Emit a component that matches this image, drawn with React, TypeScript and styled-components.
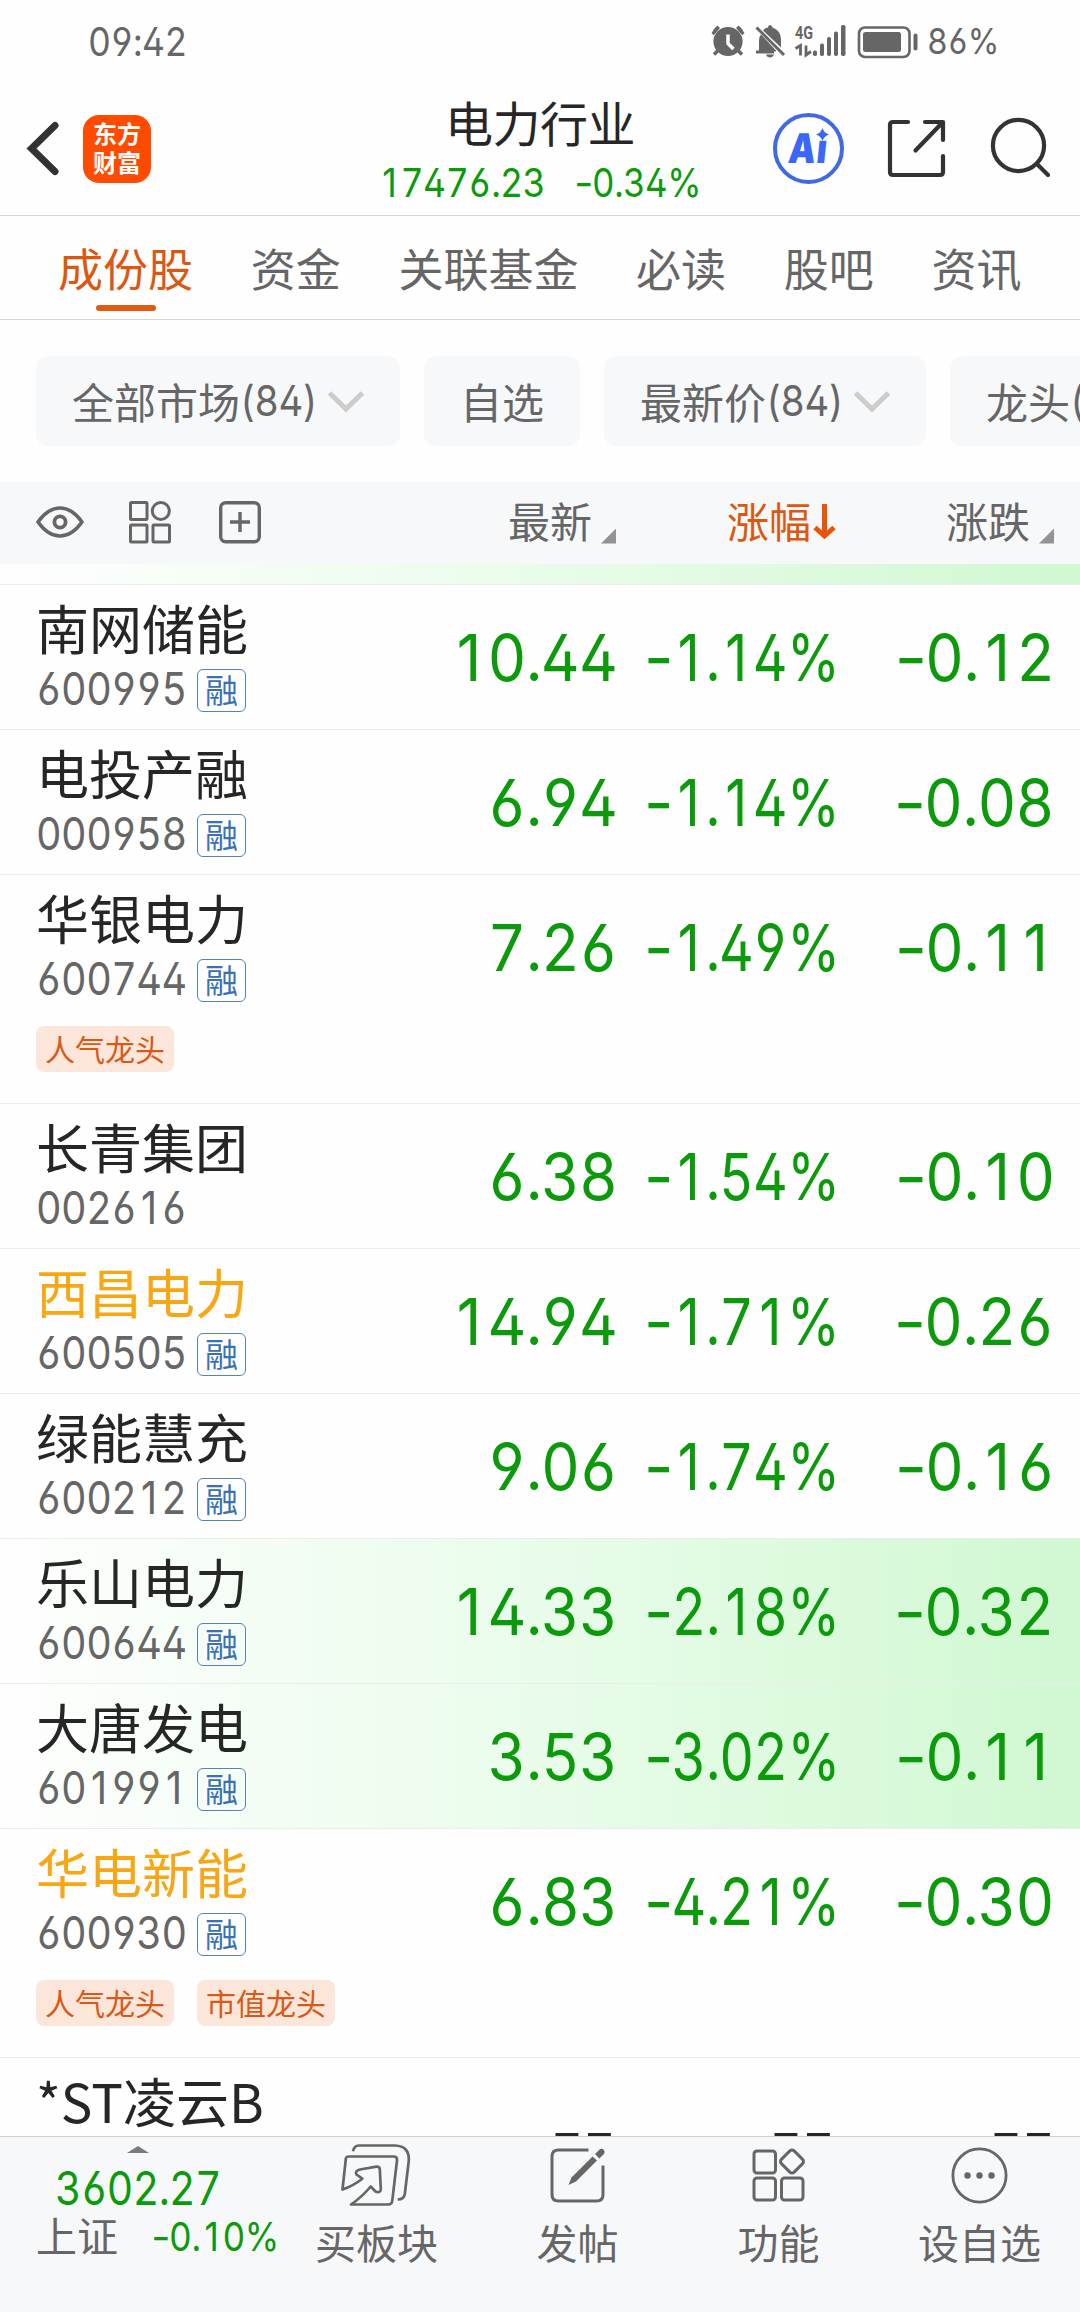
import React from "react";
import styled, { createGlobalStyle } from "styled-components";

const ink = "#262626";
const grey = "#666666";
const green = "#0a9a0a";
const orange = "#dc5810";
const panel = "#f7f8fa";

const GlobalStyle = createGlobalStyle`
  * { box-sizing: border-box; }
  body {
    margin: 0;
    background: #fefefe;
    font-family: "Noto Sans CJK SC", sans-serif;
    color: ${ink};
  }
`;

const Screen = styled.div`
  width: 1080px;
  height: 2312px;
  display: flex;
  flex-direction: column;
  overflow: hidden;
  background: #fefefe;
  white-space: nowrap;
`;

const Icon = styled.svg`
  display: block;
  flex: none;
  overflow: visible;
  fill: none;
  stroke: ${grey};
`;

/* Condensed tabular figures with open 4, 6 and 9 */
const Figures = styled.span<{ $size: number; $scale: number; $from: string; $color: string }>`
  display: inline-block;
  font-family: Inter, "Noto Sans CJK SC", sans-serif;
  font-size: ${(p) => p.$size}px;
  line-height: 1;
  letter-spacing: -0.015em;
  font-feature-settings: "cv02", "cv03", "cv04";
  font-variant-numeric: tabular-nums;
  color: ${(p) => p.$color};
  transform: scaleX(${(p) => p.$scale});
  transform-origin: ${(p) => p.$from} center;
`;
const One = styled.span`
  display: inline-block;
  width: 0.63em;
  text-align: center;
  font-variant-numeric: proportional-nums;
`;
const Point = styled.span`
  display: inline-block;
  width: 0.255em;
  font-variant-numeric: proportional-nums;
`;
const Minus = styled.span<{ $wide: boolean }>`
  display: inline-block;
  width: ${(p) => (p.$wide ? 0.54 : 0.485)}em;
  text-align: center;
  font-variant-numeric: proportional-nums;
  transform: scaleX(1.19);
`;

type NumProps = { size: number; scale?: number; from?: string; color?: string; children: string };

const Num = ({ size, scale = 0.895, from = "left", color = green, children }: NumProps) => (
  <Figures $size={size} $scale={scale} $from={from} $color={color}>
    {children.split(/([1.-])/).map((part, i) => {
      if (part === "1") return <One key={i}>1</One>;
      if (part === ".") return <Point key={i}>.</Point>;
      if (part === "-") return <Minus key={i} $wide={children === "--"}>-</Minus>;
      return part;
    })}
  </Figures>
);

const StatusBar = styled.div`
  height: 82px;
  flex: none;
  display: flex;
  align-items: center;
  padding: 0 84px 0 88px;
`;
const StatusIcons = styled.div`
  margin-left: auto;
  display: flex;
  align-items: center;
  gap: 10px;
  width: 285px;
`;

const Header = styled.header`
  height: 134px;
  flex: none;
  display: flex;
  align-items: center;
  border-bottom: 1px solid #d4d4d4;
  padding: 0 30px 0 27px;
`;
const Logo = styled.div`
  width: 68px;
  height: 68px;
  margin-left: 24px;
  border-radius: 16px;
  background: #ff4a00;
  color: #fff;
  font-size: 24px;
  font-weight: 700;
  line-height: 29px;
  text-align: center;
  padding-top: 3px;
`;
const TitleBlock = styled.div`
  flex: 1;
  display: flex;
  flex-direction: column;
  padding-left: 227px;
`;
const Title = styled.div`
  font-size: 48px;
  line-height: 56px;
  padding-left: 67px;
  letter-spacing: -0.5px;
`;
const Quote = styled.div`
  display: flex;
  height: 56px;
  padding-top: 14px;
`;
const QuoteValue = styled.div<{ $w: number }>`
  width: ${(p) => p.$w}px;
  flex: none;
`;
const AiBadge = styled.div`
  width: 71px;
  height: 71px;
  border: 4px solid #4169e6;
  border-radius: 50%;
  display: flex;
  align-items: center;
  justify-content: center;
  position: relative;
  flex: none;
  color: #3a66ff;
  font: 900 41px/1 Inter, sans-serif;
`;
const AiText = styled.span`
  display: inline-block;
  letter-spacing: 1px;
  transform: skewX(-6deg) scaleX(0.84);
`;
const Spark = styled(Icon)`
  position: absolute;
  left: 39px;
  top: 11px;
`;

const Tabs = styled.nav`
  height: 104px;
  flex: none;
  display: flex;
  gap: 57.7px;
  padding-left: 58px;
  border-bottom: 1px solid #d4d4d4;
`;
const Tab = styled.div<{ $active?: boolean }>`
  font-size: 45px;
  line-height: 66px;
  padding-top: 19px;
  display: flex;
  flex-direction: column;
  align-items: center;
  color: ${(p) => (p.$active ? orange : grey)};
  &::after {
    content: "";
    display: ${(p) => (p.$active ? "block" : "none")};
    width: 60px;
    height: 6px;
    margin-top: 4px;
    border-radius: 3px;
    background: #e05a10;
  }
`;

const Filters = styled.div`
  height: 162px;
  flex: none;
  display: flex;
  gap: 24px;
  padding: 36px 0 0 36px;
`;
const Chip = styled.div<{ $w: number }>`
  width: ${(p) => p.$w}px;
  flex: none;
  height: 90px;
  border-radius: 12px;
  background: ${panel};
  color: ${grey};
  font-size: 42px;
  line-height: 90px;
  padding-left: 36px;
  display: flex;
  align-items: center;
`;
const ChipCount = styled.div`
  width: 88px;
  display: flex;
`;

const Columns = styled.div`
  height: 82px;
  flex: none;
  display: grid;
  grid-template-columns: 398px 218px 220px 244px;
  background: ${panel};
`;
const Tools = styled.div`
  display: flex;
  align-items: center;
  padding: 0 0 2px 36px;
`;
const Tool = styled(Icon)<{ $gap: number }>`
  margin-right: ${(p) => p.$gap}px;
`;
const ColumnName = styled.div<{ $active?: boolean; $end?: number }>`
  display: flex;
  justify-content: flex-end;
  align-items: center;
  font-size: 42px;
  line-height: 72px;
  padding-bottom: 7px;
  padding-right: ${(p) => p.$end ?? 0}px;
  color: ${(p) => (p.$active ? orange : grey)};
`;
const Corner = styled.i`
  width: 15px;
  height: 15px;
  margin: 33px 0 0 9px;
  background: #929297;
  clip-path: polygon(100% 0, 100% 100%, 0 100%);
`;

const List = styled.main`
  flex: 1;
  min-height: 0;
  overflow: hidden;
`;
const fade = "linear-gradient(90deg, #fefefe 0, #e9fcea 50%, #d0f8d1 100%)";
const Peek = styled.div`
  height: 21px;
  border-bottom: 1px solid #ececec;
  background: ${fade};
`;
const Row = styled.div<{ $flash?: boolean }>`
  border-bottom: 1px solid #ececec;
  background: ${(p) => (p.$flash ? fade : "none")};
`;
const Cells = styled.div`
  height: 144px;
  display: grid;
  grid-template-columns: 401px 216px 222px 241px;
`;
const Identity = styled.div`
  padding: 9px 0 0 36px;
`;
const Name = styled.div<{ $gold?: boolean }>`
  font-size: 53px;
  line-height: 66px;
  color: ${(p) => (p.$gold ? "#f8a614" : ink)};
`;
const CodeLine = styled.div`
  display: flex;
  align-items: center;
  height: 46px;
  margin-top: 7px;
`;
const CodeBox = styled.div`
  width: 161px;
  height: 48px;
`;
const Margin = styled.div`
  width: 49px;
  height: 43px;
  border: 1.5px solid #5583b4;
  border-radius: 6px;
  color: #3a71b4;
  font-size: 33px;
  line-height: 38px;
  text-align: center;
`;
const Value = styled.div<{ $end?: number; $top?: number }>`
  display: flex;
  justify-content: flex-end;
  align-items: center;
  padding-top: ${(p) => p.$top ?? 0}px;
  padding-right: ${(p) => p.$end ?? 0}px;
`;
const Tags = styled.div`
  height: 84px;
  display: flex;
  gap: 23px;
  padding: 7px 0 0 36px;
`;
const Tag = styled.div`
  height: 46px;
  padding: 0 9px;
  border-radius: 8px;
  background: #fce6da;
  color: #d85a18;
  font-size: 30px;
  line-height: 44px;
`;

const BottomBar = styled.footer`
  height: 176px;
  flex: none;
  display: grid;
  grid-template-columns: 276px repeat(4, 201px);
  border-top: 1px solid #cdcfd2;
  background: ${panel};
`;
const Index = styled.div`
  padding-top: 9px;
`;
const Caret = styled.i`
  display: block;
  width: 22px;
  height: 7px;
  margin-left: 127px;
  background: #7a7a7c;
  clip-path: polygon(50% 0, 100% 100%, 0 100%);
`;
const IndexPrice = styled.div`
  height: 51px;
  padding: 11px 0 0 55px;
`;
const IndexLine = styled.div`
  display: flex;
  align-items: center;
  height: 60px;
  padding-left: 36px;
  font-size: 41px;
  line-height: 60px;
  color: ${grey};
`;
const IndexChange = styled.div`
  margin: 5px 0 0 34px;
  display: flex;
`;
const Action = styled.div`
  display: flex;
  flex-direction: column;
  align-items: center;
  font-size: 41px;
  line-height: 56px;
  color: ${grey};
`;
const ActionIcon = styled.div`
  height: 76px;
  display: flex;
  align-items: center;
`;

type Stock = {
  name: string;
  code: string;
  price: string;
  pct: string;
  change: string;
  margin?: boolean;
  gold?: boolean;
  flash?: boolean;
  tags?: string[];
};

const stocks: Stock[] = [
  { name: "南网储能", code: "600995", price: "10.44", pct: "-1.14%", change: "-0.12", margin: true },
  { name: "电投产融", code: "000958", price: "6.94", pct: "-1.14%", change: "-0.08", margin: true },
  { name: "华银电力", code: "600744", price: "7.26", pct: "-1.49%", change: "-0.11", margin: true, tags: ["人气龙头"] },
  { name: "长青集团", code: "002616", price: "6.38", pct: "-1.54%", change: "-0.10" },
  { name: "西昌电力", code: "600505", price: "14.94", pct: "-1.71%", change: "-0.26", margin: true, gold: true },
  { name: "绿能慧充", code: "600212", price: "9.06", pct: "-1.74%", change: "-0.16", margin: true },
  { name: "乐山电力", code: "600644", price: "14.33", pct: "-2.18%", change: "-0.32", margin: true, flash: true },
  { name: "大唐发电", code: "601991", price: "3.53", pct: "-3.02%", change: "-0.11", margin: true, flash: true },
  { name: "华电新能", code: "600930", price: "6.83", pct: "-4.21%", change: "-0.30", margin: true, gold: true, tags: ["人气龙头", "市值龙头"] },
  { name: "*ST凌云B", code: "", price: "--", pct: "--", change: "--" },
];

const StockRow = ({ s }: { s: Stock }) => {
  const idle = s.price === "--";
  const color = idle ? ink : green;
  const top = idle ? 4 : 0;
  return (
    <Row $flash={s.flash}>
      <Cells>
        <Identity>
          <Name $gold={s.gold}>{s.name}</Name>
          {s.code && (
            <CodeLine>
              <CodeBox>
                <Num size={45} scale={0.88} color={grey}>{s.code}</Num>
              </CodeBox>
              {s.margin && <Margin>融</Margin>}
            </CodeLine>
          )}
        </Identity>
        <Value $top={top} $end={idle ? 2 : 0}>
          <Num size={65} scale={0.925} from="right" color={color}>{s.price}</Num>
        </Value>
        <Value $top={top} $end={idle ? 5 : 0}>
          <Num size={65} scale={idle ? 0.925 : 0.828} from="right" color={color}>{s.pct}</Num>
        </Value>
        <Value $top={top} $end={26}>
          <Num size={65} scale={0.925} from="right" color={color}>{s.change}</Num>
        </Value>
      </Cells>
      {s.tags && <Tags>{s.tags.map((t) => <Tag key={t}>{t}</Tag>)}</Tags>}
    </Row>
  );
};

const Chevron = () => (
  <Icon width="36" height="21" viewBox="0 0 36 21" style={{ stroke: "#cccccc" }} strokeWidth="5">
    <path d="M1.5 2 L18 18 L34.5 2" />
  </Icon>
);

export default function App() {
  return (
    <Screen>
      <GlobalStyle />
      <StatusBar>
        <Num size={39} color={grey} scale={0.91}>09:42</Num>
        <StatusIcons>
          <Icon width="206" height="33" viewBox="711 24.5 206 33">
            <g fill={grey} stroke="none">
              <circle cx="728" cy="41" r="14.6" />
              <path d="M711.5 33 a18 18 0 0 1 6-8 l2.5 2.5 l-6 7z M744.500 33 a18 18 0 0 0 -6 -8 l-2.500 2.500 l6 7z" />
              <path d="M759 51 V40 Q759 36 761 34 L776 50 V51 Z M763 30 Q765 27 768 27 Q768 24.500 770 24.500 Q772 24.500 772.500 27 Q781 30 781 39 V47 Z M756 50 H774 V53 H756 Z M766 54 H774 Q773 57 770 57 Q767 57 766 54Z" />
              <rect x="813" y="50" width="4" height="5.500" rx="1.800" />
              <rect x="820" y="43" width="4" height="12.500" rx="1.800" />
              <rect x="827" y="36.500" width="4" height="19" rx="1.800" />
              <rect x="834" y="31" width="4" height="24.500" rx="1.800" />
              <rect x="841" y="24.500" width="4.500" height="31" rx="1.800" />
              <rect x="863" y="31.500" width="38" height="20" rx="2.500" />
              <rect x="913.500" y="33" width="4" height="17" rx="2" />
              <text x="795" y="38.500" fontFamily="Roboto" fontWeight="700" fontSize="18.500" textLength="18" lengthAdjust="spacingAndGlyphs">4G</text>
            </g>
            <path d="M728 34 V43 L733.500 48.500" style={{ stroke: "#fefefe" }} strokeWidth="3.500" />
            <path d="M714 54 l4-4 M742 54 l-4-4" strokeWidth="3.500" />
            <path d="M756.500 27 L784 54.500" strokeWidth="3" />
            <path d="M795.500 48 l5-3 V55 M811 51 l-5 3.500 V45" strokeWidth="2.800" />
            <rect x="859" y="27" width="50.500" height="29.500" rx="6" strokeWidth="2.600" />
          </Icon>
          <Num size={36} color={grey}>86%</Num>
        </StatusIcons>
      </StatusBar>

      <Header>
        <Icon width="32" height="54" viewBox="27 122 32 54" style={{ stroke: "#333" }} strokeWidth="7" strokeLinecap="round">
          <path d="M55 125.500 L31.500 148.500 L55 171.500" />
        </Icon>
        <Logo>东方<br />财富</Logo>
        <TitleBlock>
          <Title>电力行业</Title>
          <Quote>
            <QuoteValue $w={197}><Num size={39} scale={0.915}>17476.23</Num></QuoteValue>
            <QuoteValue $w={132}><Num size={39}>-0.34%</Num></QuoteValue>
          </Quote>
        </TitleBlock>
        <AiBadge>
          <AiText>Aı</AiText>
          <Spark width="13" height="13" viewBox="0 0 13 13">
            <path d="M6.500 0 Q8 5 13 6.500 Q8 8 6.500 13 Q5 8 0 6.500 Q5 5 6.500 0Z" fill="#3a66ff" stroke="none" />
          </Spark>
        </AiBadge>
        <Icon width="206" height="60" viewBox="844 119 206 60" style={{ stroke: "#333" }} strokeWidth="4.200" strokeLinecap="round" strokeLinejoin="round">
          <path d="M908 122 H893 Q890 122 890 125 V172 Q890 175 893 175 H940 Q943 175 943 172 V156" />
          <path d="M925 122 H943 V140 M942 123 L915.500 150.500" />
          <circle cx="1018.500" cy="145.500" r="25.600" />
          <path d="M1037 164 L1048 175" />
        </Icon>
      </Header>

      <Tabs>
        <Tab $active>成份股</Tab>
        <Tab>资金</Tab>
        <Tab>关联基金</Tab>
        <Tab>必读</Tab>
        <Tab>股吧</Tab>
        <Tab>资讯</Tab>
      </Tabs>

      <Filters>
        <Chip $w={364}>全部市场<ChipCount><Num size={42} color={grey} scale={0.91}>(84)</Num></ChipCount><Chevron /></Chip>
        <Chip $w={156}>自选</Chip>
        <Chip $w={322}>最新价<ChipCount><Num size={42} color={grey} scale={0.91}>(84)</Num></ChipCount><Chevron /></Chip>
        <Chip $w={322}>龙头<ChipCount><Num size={42} color={grey} scale={0.91}>(84)</Num></ChipCount></Chip>
      </Filters>

      <Columns>
        <Tools>
          <Tool $gap={45} width="48" height="32" viewBox="36 506.500 48 32" strokeWidth="3.600" strokeLinejoin="round">
            <path d="M38 522.500 Q48 508.500 60 508.500 Q72 508.500 82 522.500 Q72 536.500 60 536.500 Q48 536.500 38 522.500Z" />
            <circle cx="60" cy="522.500" r="5.600" strokeWidth="3.800" />
          </Tool>
          <Tool $gap={48} width="42" height="42" viewBox="0 0 42 42" strokeWidth="3">
            <rect x="1.500" y="1.500" width="16.500" height="17" rx="1" />
            <circle cx="31.800" cy="10" r="8.500" />
            <rect x="1.500" y="24" width="16.500" height="17" rx="1" />
            <rect x="24" y="24" width="16.500" height="17" rx="1" />
          </Tool>
          <Tool $gap={0} width="42" height="42" viewBox="0 0 42 42" strokeWidth="3.400">
            <rect x="1.700" y="1.700" width="38.600" height="39" rx="5" />
            <path d="M11 21 H31 M21 11 V31" />
          </Tool>
        </Tools>
        <ColumnName>最新<Corner /></ColumnName>
        <ColumnName $active>
          涨幅
          <Icon width="24" height="36" viewBox="0 -2 24 36" style={{ stroke: "#e65605", marginLeft: 1 }} strokeWidth="5">
            <path d="M12.500 0 V33 M3 23.500 L12.500 32 L22 23.500" />
          </Icon>
        </ColumnName>
        <ColumnName $end={26}>涨跌<Corner /></ColumnName>
      </Columns>

      <List>
        <Peek />
        {stocks.map((s) => <StockRow key={s.name} s={s} />)}
      </List>

      <BottomBar>
        <Index>
          <Caret />
          <IndexPrice><Num size={47} scale={0.87}>3602.27</Num></IndexPrice>
          <IndexLine>
            上证
            <IndexChange><Num size={40} scale={0.88}>-0.10%</Num></IndexChange>
          </IndexLine>
        </Index>
        <Action>
          <ActionIcon>
            <Icon width="69" height="62" viewBox="1 0 69 62" strokeWidth="2.700" strokeLinejoin="round">
              <path d="M1.500 45.500 L4.800 15 Q5 12.500 8 12.500 H52.500 Q56.500 12.500 56 16.500 L51.300 56.500 Q51 60.500 47 60.500 H10 Q21 53 29.700 42.500 L34.500 47.500 Q39.500 49.500 39.800 45 L38.800 25 Q38.500 22.500 35.500 22.700 L19 25.500 Q13.500 27 15.500 30.500 L21.300 34.700 Q12 42 1.500 45.500Z" />
              <path d="M12 7.300 Q13 1.500 18 1.500 H54 Q68.500 2 67.800 16.500 L63.800 50 Q63 55.500 56.700 55.500" />
            </Icon>
          </ActionIcon>
          买板块
        </Action>
        <Action>
          <ActionIcon>
            <Icon width="54" height="54" viewBox="550.5 2148.5 54 54" strokeWidth="3">
              <path d="M588 2150.500 H558 Q551.500 2150.500 551.500 2157 V2195 Q551.500 2201.500 558 2201.500 H596 Q602.500 2201.500 602.500 2195 V2166" />
              <path d="M568 2185.500 L571 2178 L592 2157 L596.500 2161 L575.500 2182 Z M594.500 2154.500 L599 2150 Q601.500 2148.500 603.300 2150.500 Q605 2152.500 603 2155 L598.800 2159 Z" fill={grey} stroke="none" />
            </Icon>
          </ActionIcon>
          发帖
        </Action>
        <Action>
          <ActionIcon>
            <Icon width="53" height="54" viewBox="0 0 53 54" strokeWidth="3">
              <rect x="2" y="3" width="21.500" height="22" rx="3" />
              <rect x="2" y="30" width="21.500" height="22" rx="3" />
              <rect x="29.500" y="30" width="21.500" height="22" rx="3" />
              <rect x="31" y="4.500" width="18" height="18" rx="3" transform="rotate(45 40 13.500)" />
            </Icon>
          </ActionIcon>
          功能
        </Action>
        <Action>
          <ActionIcon>
            <Icon width="56" height="56" viewBox="0.5 0 56 56" strokeWidth="2.800">
              <circle cx="28" cy="28.500" r="26.600" />
              <g fill={grey} stroke="none">
                <circle cx="16" cy="28.500" r="3.200" />
                <circle cx="28" cy="28.500" r="3.200" />
                <circle cx="40" cy="28.500" r="3.200" />
              </g>
            </Icon>
          </ActionIcon>
          设自选
        </Action>
      </BottomBar>
    </Screen>
  );
}
